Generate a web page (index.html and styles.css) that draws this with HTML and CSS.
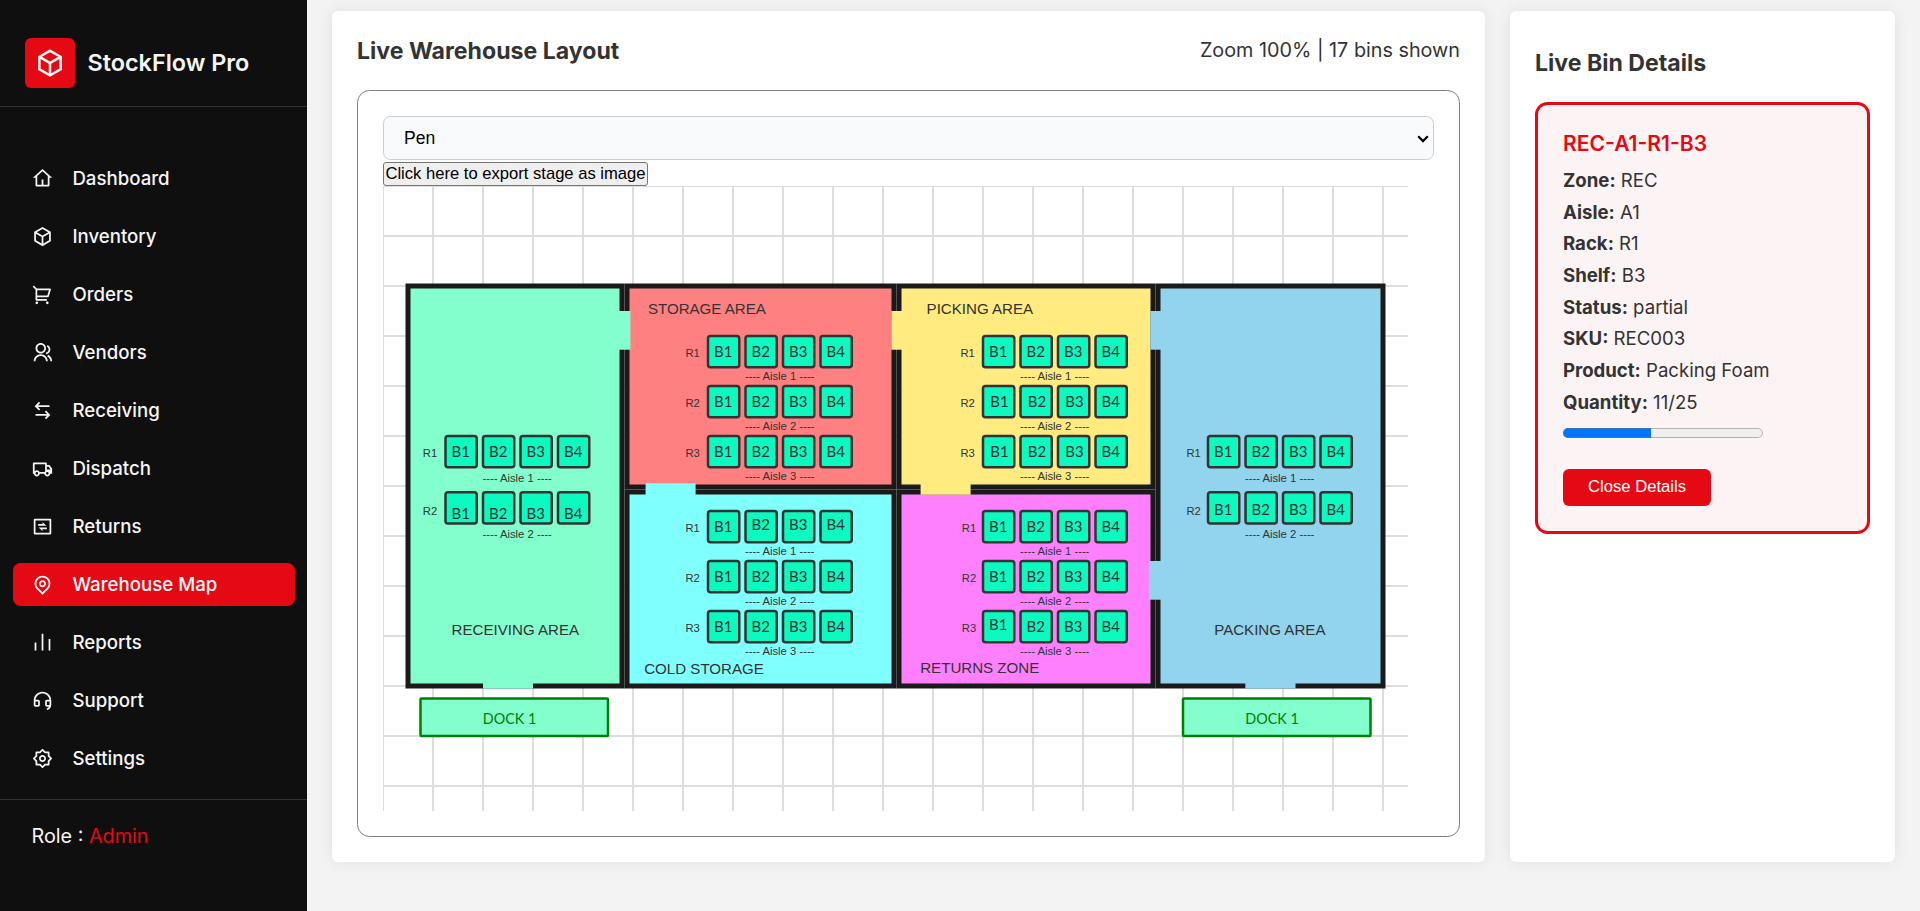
FILE: index.html
```html
<!DOCTYPE html>
<html lang="en">
<head>
<meta charset="utf-8">
<title>StockFlow Pro - Warehouse Map</title>
<link rel="stylesheet" href="styles.css">
</head>
<body>
<aside class="sidebar">
  <div class="brand">
    <span class="brand-mark"><svg viewBox="0 0 24 24"><path d="M12 1L21.5 6.5V17.5L12 23L2.5 17.5V6.5L12 1ZM5.494 7.078L12 10.844L18.506 7.078L12 3.311L5.494 7.078ZM4.5 8.813V16.347L11 20.11V12.577L4.5 8.813ZM13 20.11L19.5 16.347V8.813L13 12.577V20.11Z"/></svg></span>
    <span class="brand-name">StockFlow Pro</span>
  </div>
  <nav class="nav">
    <a class="nav-item"><svg viewBox="0 0 24 24"><path d="M19 21H5C4.448 21 4 20.552 4 20V11H1L11.327 1.612C11.709 1.265 12.291 1.265 12.673 1.612L23 11H20V20C20 20.552 19.552 21 19 21ZM13 19H18V9.157L12 3.703L6 9.157V19H11V13H13V19Z"/></svg><span>Dashboard</span></a>
    <a class="nav-item"><svg viewBox="0 0 24 24"><path d="M12 1L21.5 6.5V17.5L12 23L2.5 17.5V6.5L12 1ZM5.494 7.078L12 10.844L18.506 7.078L12 3.311L5.494 7.078ZM4.5 8.813V16.347L11 20.11V12.577L4.5 8.813ZM13 20.11L19.5 16.347V8.813L13 12.577V20.11Z"/></svg><span>Inventory</span></a>
    <a class="nav-item"><svg viewBox="0 0 24 24"><path d="M4.004 6.417L0.762 3.174L2.176 1.76L5.419 5.003H20.66C21.213 5.003 21.66 5.45 21.66 6.003C21.66 6.1 21.646 6.197 21.618 6.29L19.218 14.29C19.091 14.713 18.702 15.003 18.26 15.003H6.004V17.003H17.004V19.003H5.004C4.452 19.003 4.004 18.555 4.004 18.003V6.417ZM6.004 7.003V13.003H17.516L19.316 7.003H6.004ZM5.504 23.003C4.676 23.003 4.004 22.331 4.004 21.503C4.004 20.674 4.676 20.003 5.504 20.003C6.333 20.003 7.004 20.674 7.004 21.503C7.004 22.331 6.333 23.003 5.504 23.003ZM17.504 23.003C16.676 23.003 16.004 22.331 16.004 21.503C16.004 20.674 16.676 20.003 17.504 20.003C18.333 20.003 19.004 20.674 19.004 21.503C19.004 22.331 18.333 23.003 17.504 23.003Z"/></svg><span>Orders</span></a>
    <a class="nav-item"><svg viewBox="0 0 24 24"><path d="M2 22C2 17.582 5.582 14 10 14C14.418 14 18 17.582 18 22H16C16 18.686 13.314 16 10 16C6.686 16 4 18.686 4 22H2ZM10 13C6.685 13 4 10.315 4 7C4 3.685 6.685 1 10 1C13.315 1 16 3.685 16 7C16 10.315 13.315 13 10 13ZM10 11C12.21 11 14 9.21 14 7C14 4.79 12.21 3 10 3C7.79 3 6 4.79 6 7C6 9.21 7.79 11 10 11ZM18.284 14.703C21.064 15.956 23 18.752 23 22H21C21 19.564 19.548 17.467 17.463 16.527L18.284 14.703ZM17.596 3.413C19.594 4.237 21 6.204 21 8.5C21 11.37 18.804 13.725 16 13.978V11.965C17.697 11.722 19 10.264 19 8.5C19 7.119 18.202 5.926 17.041 5.356L17.596 3.413Z"/></svg><span>Vendors</span></a>
    <a class="nav-item"><svg viewBox="0 0 24 24"><path d="M16.05 12.05L21 17L16.05 21.949L14.636 20.535L17.172 18H4V16H17.172L14.636 13.464L16.05 12.05ZM7.95 2.05L9.364 3.464L6.828 6H20V8H6.828L9.364 10.535L7.95 11.949L3 7L7.95 2.05Z"/></svg><span>Receiving</span></a>
    <a class="nav-item"><svg viewBox="0 0 24 24"><path d="M8.965 18C8.722 19.696 7.263 21 5.5 21C3.737 21 2.278 19.696 2.035 18H1V6C1 5.448 1.448 5 2 5H16C16.552 5 17 5.448 17 6V8H20L23 12.056V18H20.965C20.722 19.696 19.263 21 17.5 21C15.737 21 14.278 19.696 14.035 18H8.965ZM15 7H3V15.05C3.635 14.402 4.521 14 5.5 14C6.896 14 8.101 14.818 8.663 16H14.337C14.504 15.647 14.73 15.326 15 15.05V7ZM17 13H21V12.715L18.992 10H17V13ZM17.5 19C18.328 19 19 18.328 19 17.5C19 16.672 18.328 16 17.5 16C16.672 16 16 16.672 16 17.5C16 18.328 16.672 19 17.5 19ZM7 17.5C7 16.672 6.328 16 5.5 16C4.672 16 4 16.672 4 17.5C4 18.328 4.672 19 5.5 19C6.328 19 7 18.328 7 17.5Z"/></svg><span>Dispatch</span></a>
    <a class="nav-item"><svg viewBox="0 0 24 24"><path d="M3 3H21C21.552 3 22 3.448 22 4V20C22 20.552 21.552 21 21 21H3C2.448 21 2 20.552 2 20V4C2 3.448 2.448 3 3 3ZM4 5V19H20V5H4ZM12 9V7L16.5 11H7V9H12ZM12 15V17L7.5 13H17V15H12Z"/></svg><span>Returns</span></a>
    <a class="nav-item active"><svg viewBox="0 0 24 24"><path d="M12 20.9L16.95 15.95C19.683 13.216 19.683 8.784 16.95 6.05C14.216 3.317 9.784 3.317 7.05 6.05C4.317 8.784 4.317 13.216 7.05 15.95L12 20.9ZM12 23.728L5.636 17.364C2.121 13.849 2.121 8.151 5.636 4.636C9.151 1.121 14.849 1.121 18.364 4.636C21.879 8.151 21.879 13.849 18.364 17.364L12 23.728ZM12 13C13.105 13 14 12.105 14 11C14 9.895 13.105 9 12 9C10.895 9 10 9.895 10 11C10 12.105 10.895 13 12 13ZM12 15C9.791 15 8 13.209 8 11C8 8.791 9.791 7 12 7C14.209 7 16 8.791 16 11C16 13.209 14.209 15 12 15Z"/></svg><span>Warehouse Map</span></a>
    <a class="nav-item"><svg viewBox="0 0 24 24"><path d="M3 12H5V21H3V12ZM19 8H21V21H19V8ZM11 2H13V21H11V2Z"/></svg><span>Reports</span></a>
    <a class="nav-item"><svg viewBox="0 0 24 24"><path d="M22 17.002C21.999 19.873 19.982 22.273 17.287 22.862L16.649 20.948C17.853 20.751 18.877 20.017 19.465 19H17C15.895 19 15 18.105 15 17V13C15 11.895 15.895 11 17 11H19.938C19.446 7.054 16.08 4 12 4C7.92 4 4.554 7.054 4.062 11H7C8.105 11 9 11.895 9 13V17C9 18.105 8.105 19 7 19H4C2.895 19 2 18.105 2 17V12C2 6.477 6.477 2 12 2C17.523 2 22 6.477 22 12V17.002ZM20 17V13H17V17H20ZM4 13V17H7V13H4Z"/></svg><span>Support</span></a>
    <a class="nav-item"><svg viewBox="0 0 24 24"><path d="M8.686 4L11.293 1.393C11.684 1.003 12.317 1.003 12.707 1.393L15.314 4H19C19.552 4 20 4.448 20 5V8.686L22.607 11.293C22.997 11.684 22.997 12.317 22.607 12.707L20 15.314V19C20 19.552 19.552 20 19 20H15.314L12.707 22.607C12.317 22.997 11.684 22.997 11.293 22.607L8.686 20H5C4.448 20 4 19.552 4 19V15.314L1.393 12.707C1.003 12.317 1.003 11.684 1.393 11.293L4 8.686V5C4 4.448 4.448 4 5 4H8.686ZM6 6V9.515L3.515 12L6 14.485V18H9.515L12 20.485L14.485 18H18V14.485L20.485 12L18 9.515V6H14.485L12 3.515L9.515 6H6ZM12 16C9.791 16 8 14.209 8 12C8 9.791 9.791 8 12 8C14.209 8 16 9.791 16 12C16 14.209 14.209 16 12 16ZM12 14C13.105 14 14 13.105 14 12C14 10.895 13.105 10 12 10C10.895 10 10 10.895 10 12C10 13.105 10.895 14 12 14Z"/></svg><span>Settings</span></a>
  </nav>
  <div class="role">Role : <span>Admin</span></div>
</aside>

<main class="main">
  <section class="card layout-card">
    <header class="layout-head">
      <h2>Live Warehouse Layout</h2>
      <p class="zoom-info">Zoom 100% | 17 bins shown</p>
    </header>
    <div class="stage-frame">
      <div class="select-wrap">
        <select class="tool-select"><option>Pen</option><option>Eraser</option></select>
        <svg class="select-arrow" viewBox="0 0 12 8"><path d="M1.2 1.3L6 6.1L10.8 1.3"/></svg>
      </div>
      <button class="export-btn">Click here to export stage as image</button>
      <svg class="stage" id="stage" width="1025" height="625" viewBox="0 0 1025 625"></svg>
    </div>
  </section>

  <section class="card details-card">
    <h2>Live Bin Details</h2>
    <div class="bin-box">
      <h3>REC-A1-R1-B3</h3>
      <p><b>Zone:</b> REC</p>
      <p><b>Aisle:</b> A1</p>
      <p><b>Rack:</b> R1</p>
      <p><b>Shelf:</b> B3</p>
      <p><b>Status:</b> partial</p>
      <p><b>SKU:</b> REC003</p>
      <p><b>Product:</b> Packing Foam</p>
      <p><b>Quantity:</b> 11/25</p>
      <progress value="11" max="25"></progress>
      <button class="close-btn">Close Details</button>
    </div>
  </section>
</main>
<script src="script.js"></script>
</body>
</html>
```

FILE: styles.css
```css
* { box-sizing: border-box; }

body {
  margin: 0;
  height: 911px;
  display: flex;
  overflow: hidden;
  background: #f3f3f3;
  color: #333;
  font-family: Inter, "Liberation Sans", sans-serif;
}

h2, h3, p { margin: 0; }

/* Sidebar */
.sidebar {
  width: 307px;
  flex: none;
  height: 911px;
  background: #0f0f0f;
  color: #f5f5f5;
}

.brand {
  height: 107px;
  padding: 38px 25px 0;
  display: flex;
  align-items: flex-start;
  gap: 12.5px;
  border-bottom: 1px solid #333;
}

.brand-mark {
  width: 50px;
  height: 50px;
  border-radius: 6px;
  background: #e50914;
  display: grid;
  place-items: center;
}

.brand-mark svg { width: 30px; height: 30px; fill: #f5f5f5; }

.brand-name {
  font-size: 23.4px;
  font-weight: 600;
  line-height: 50px;
}

.nav {
  padding: 50px 12px 0 13px;
  display: flex;
  flex-direction: column;
  gap: 15px;
}

.nav-item {
  height: 43px;
  padding-left: 19px;
  border-radius: 7.5px;
  display: flex;
  align-items: center;
  gap: 19.4px;
  font-size: 18.65px;
  font-weight: 500;
}

.nav-item span { line-height: 24px; padding-bottom: 2px; }
.nav-item svg { width: 21px; height: 21px; fill: currentColor; }
.nav-item.active { background: #e50914; }

.role {
  margin-top: 19px;
  padding: 24px 0 0 31.5px;
  border-top: 1px solid #333;
  font-size: 19.8px;
  line-height: 25px;
}

.role span { color: #e50914; }

/* Main area */
.main {
  flex: 1;
  display: flex;
  align-items: flex-start;
  gap: 25px;
  padding: 11px 25px 0;
}

.card {
  height: 851px;
  background: #fff;
  border-radius: 6px;
  box-shadow: 0 0 15px rgba(0, 0, 0, 0.08);
}

.layout-card { width: 1153px; padding: 25px; }
.details-card { width: 385px; padding: 37px 25px 0; }

.card h2 {
  font-size: 23.1px;
  font-weight: 700;
  line-height: 30px;
}

.layout-head {
  display: flex;
  justify-content: space-between;
  height: 54px;
}

.zoom-info { font-size: 19.8px; line-height: 28px; }

.stage-frame {
  height: 747px;
  padding: 25px;
  border: 1px solid #808080;
  border-radius: 12.5px;
  display: flex;
  flex-direction: column;
  align-items: flex-start;
}

.select-wrap {
  position: relative;
  height: 44px;
  margin-bottom: 2px;
}

.select-arrow {
  position: absolute;
  right: 5px;
  top: 19px;
  width: 12px;
  height: 8px;
  fill: none;
  stroke: #000;
  stroke-width: 2.2;
  pointer-events: none;
}

.tool-select {
  display: block;
  appearance: none;
  width: 1051px;
  height: 44px;
  margin: 0;
  padding: 0 0 1px 20px;
  border: 1px solid #ccc;
  border-radius: 7.5px;
  background-color: #f9fafc;
  color: #000;
  font: 17.5px "Liberation Sans", Arial, sans-serif;
}

.export-btn {
  width: 265px;
  height: 24px;
  padding: 0;
  border: 1px solid #767676;
  border-radius: 3px;
  background: #efefef;
  color: #000;
  white-space: nowrap;
  font: 16.6px "Liberation Sans", Arial, sans-serif;
}

.stage { display: block; }

/* Warehouse drawing */
.grid-line { stroke: #ddd; stroke-width: 2; }
.room { stroke: #1a1a1a; stroke-width: 5; }
.bin { fill: #0afac0; stroke: #333; stroke-width: 2.5; }
.dock { fill: #82ffcc; stroke: #008000; stroke-width: 2.5; }
.bin-text, .dock-text { font-family: Lato, Carlito, sans-serif; font-size: 15.75px; fill: #333; }
.dock-text { fill: #008000; }
.small-text { font-family: "Liberation Sans", Arial, sans-serif; font-size: 11.25px; fill: #333; }
.area-text { font-family: "Liberation Sans", Arial, sans-serif; font-size: 15.1px; fill: #333; }

/* Bin details */
.bin-box {
  height: 432px;
  margin-top: 24px;
  padding: 25px;
  border: 3px solid #e50914;
  border-radius: 12.5px;
  background: #fcf3f4;
}

.bin-box h3 {
  margin-bottom: 7px;
  font-size: 21.1px;
  font-weight: 600;
  line-height: 28px;
  color: #e50914;
}

.bin-box p { font-size: 18.6px; line-height: 31.7px; height: 31.7px; }
.bin-box b { font-weight: 700; }

.bin-box progress {
  display: block;
  width: 200px;
  height: 20px;
  margin: 4px 0 26px;
}

.close-btn {
  display: block;
  width: 148px;
  height: 37px;
  border: 0;
  border-radius: 6px;
  background: #e50914;
  color: #fff;
  font: 16.67px "Liberation Sans", Arial, sans-serif;
}
```

FILE: script.js
```js
const NS = "http://www.w3.org/2000/svg";
const stage = document.getElementById("stage");

function add(tag, attrs, text) {
  const el = document.createElementNS(NS, tag);
  for (const key in attrs) el.setAttribute(key, attrs[key]);
  if (text !== undefined) el.textContent = text;
  stage.appendChild(el);
}

for (let x = 0; x <= 1025; x += 50) add("line", { class: "grid-line", x1: x, y1: 0, x2: x, y2: 625 });
for (let y = 0; y <= 625; y += 50) add("line", { class: "grid-line", x1: 0, y1: y, x2: 1025, y2: y });

const color = {
  rec: "#82ffcc", sto: "#ff8080", pick: "#ffeb80",
  cold: "#80ffff", ret: "#ff80ff", pack: "#92d3ed"
};

// [fill, left, top, right, bottom]
[
  ["rec", 25, 100, 239, 500],
  ["sto", 244, 100, 511, 301],
  ["pick", 516, 100, 770, 301],
  ["cold", 244, 306, 511, 500],
  ["ret", 516, 306, 770, 500],
  ["pack", 775, 100, 1000, 500]
].forEach(([c, l, t, r, b]) =>
  add("rect", { class: "room", fill: color[c], x: l, y: t, width: r - l, height: b - t }));

// Door openings
[
  ["rec", 236, 125, 247.4, 163.7],
  ["rec", 100, 497, 150, 502.6],
  ["pick", 508.4, 125, 519, 163.7],
  ["pick", 537.6, 298, 587.6, 308.7],
  ["cold", 262.6, 297.3, 312.6, 309],
  ["pack", 767.4, 125, 778, 163.7],
  ["pack", 766, 375, 778, 413.7],
  ["pack", 862.3, 497, 912.5, 502.6]
].forEach(([c, l, t, r, b]) =>
  add("rect", { fill: color[c], x: l, y: t, width: r - l, height: b - t }));

// Racks; shift gives label offsets for a row and bin index
function racks(cfg) {
  cfg.rows.forEach((y, r) => {
    const label = cfg.labelY ? cfg.labelY[r] : 20.7;
    add("text", { class: "small-text", x: cfg.x + cfg.labelX, y: y + label }, "R" + (r + 1));
    for (let i = 0; i < 4; i++) {
      const x = cfg.x + i * 37.5;
      const [dx, dy] = (cfg.shift && cfg.shift(r, i)) || [0, 0];
      add("rect", { class: "bin", x, y, width: 31.25, height: 31.25, rx: 2.5 });
      add("text", {
        class: "bin-text", x: x + 6 + dx, y: y + cfg.base + dy,
        textLength: 18.4, lengthAdjust: "spacingAndGlyphs"
      }, "B" + (i + 1));
    }
    add("text", { class: "small-text", x: cfg.x + 37, y: y + cfg.aisle }, "---- Aisle " + (r + 1) + " ----");
  });
}

racks({ x: 62.5, rows: [250, 306.25], labelX: -22.7, labelY: [20.7, 22.4], base: 21.3, aisle: 45.6,
  shift: r => r === 1 ? [0, 5] : null });
racks({ x: 325, rows: [150, 200, 250], labelX: -22.6, base: 21, aisle: 43.7 });
racks({ x: 600, rows: [150, 200, 250], labelX: -22.6, base: 21, aisle: 43.7,
  shift: (r, i) => r > 0 && i < 3 ? [1.2, 0] : null });
racks({ x: 325, rows: [325, 375, 425], labelX: -22.6, base: 21, aisle: 43.7,
  shift: (r, i) => r === 0 && i > 0 ? [0, -2] : null });
racks({ x: 600, rows: [325, 375, 425], labelX: -21.2, base: 21, aisle: 43.7,
  shift: (r, i) => r === 2 && i === 0 ? [0, -2] : null });
racks({ x: 825, rows: [250, 306.25], labelX: -21.6, labelY: [20.7, 22.4], base: 21.3, aisle: 45.6,
  shift: r => r === 1 ? [0, 1] : null });

[
  ["RECEIVING AREA", 68.6, 449],
  ["STORAGE AREA", 264.9, 128],
  ["PICKING AREA", 543.6, 128],
  ["COLD STORAGE", 261.2, 488],
  ["RETURNS ZONE", 537.2, 487],
  ["PACKING AREA", 831.2, 449]
].forEach(([t, x, y]) => add("text", { class: "area-text", x, y }, t));

[37.5, 800].forEach(x => {
  add("rect", { class: "dock", x, y: 512.5, width: 187.5, height: 37.5, rx: 1 });
  add("text", {
    class: "dock-text", x: x + 62.3, y: 537.7,
    textLength: 53.6, lengthAdjust: "spacingAndGlyphs"
  }, "DOCK 1");
});
```
